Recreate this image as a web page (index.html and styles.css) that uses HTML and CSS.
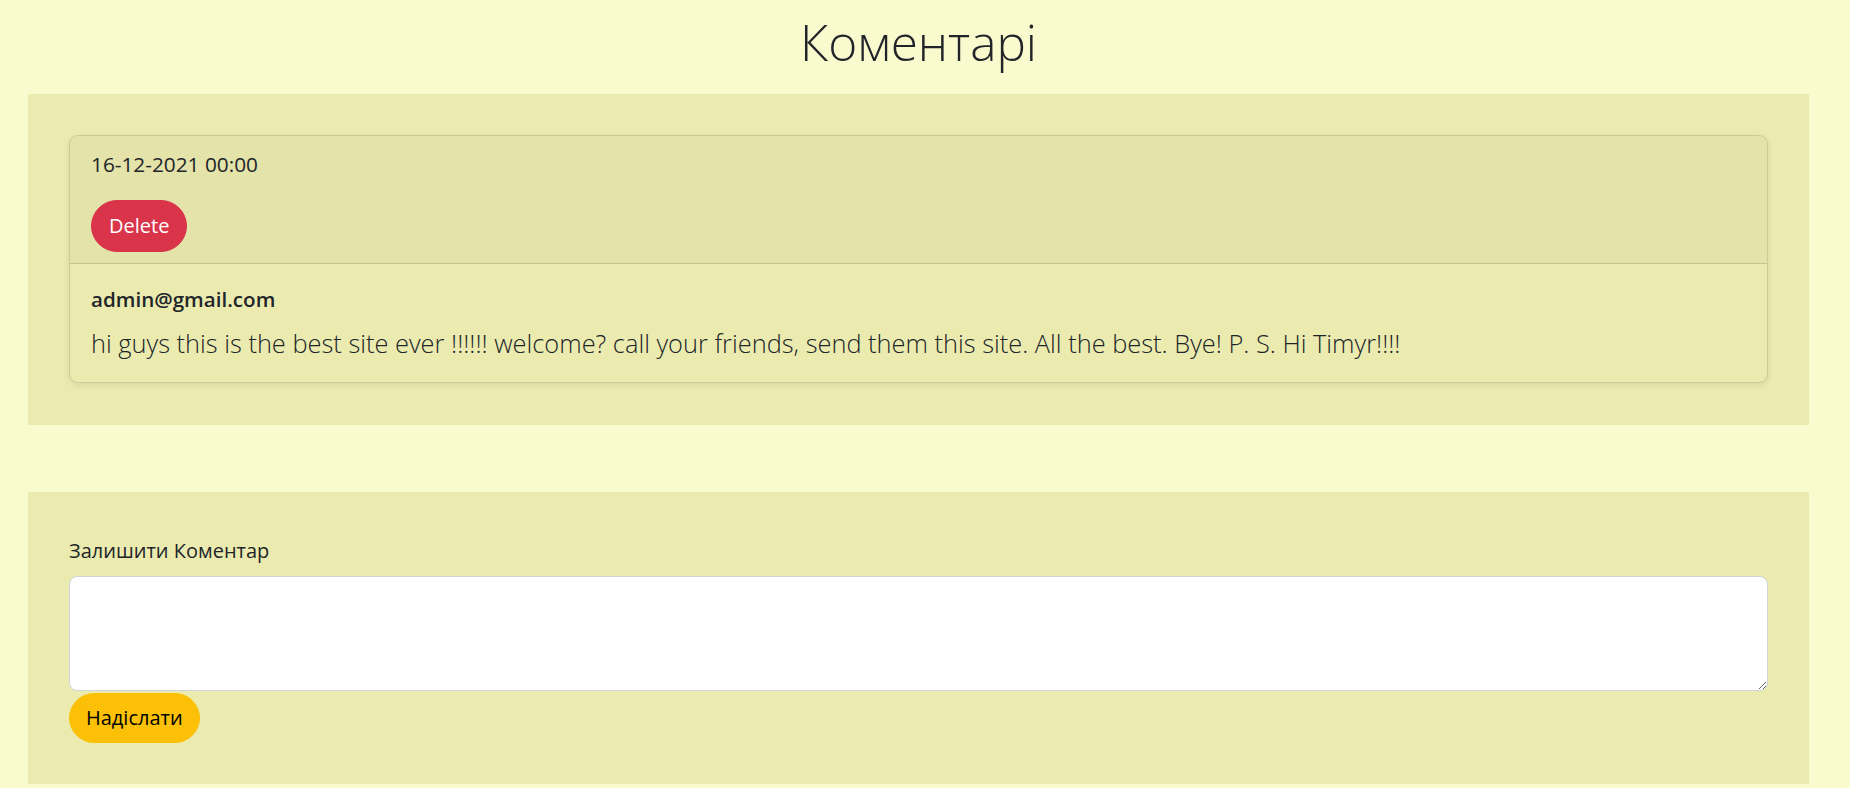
FILE: index.html
```html
<!DOCTYPE html>
<html lang="uk">
<head>
<meta charset="utf-8">
<title>Коментарі</title>
<link rel="stylesheet" href="styles.css">
</head>
<body>
<main class="page">
  <h1 class="page-title">Коментарі</h1>

  <section class="panel panel-comments">
    <article class="card">
      <header class="card-header">
        <p class="card-date">16-12-2021 00:00</p>
        <button type="button" class="btn btn-pill btn-danger">Delete</button>
      </header>
      <div class="card-body">
        <h6 class="card-author">admin@gmail.com</h6>
        <p class="card-text">hi guys this is the best site ever !!!!!! welcome? call your friends, send them this site. All the best. Bye! P. S. Hi Timyr!!!!</p>
      </div>
    </article>
  </section>

  <section class="panel panel-form">
    <form class="comment-form">
      <label class="form-label" for="comment">Залишити Коментар</label>
      <textarea id="comment" class="form-control"></textarea>
      <button type="submit" class="btn btn-pill btn-warning">Надіслати</button>
    </form>
  </section>
</main>
</body>
</html>
```
FILE: styles.css
```css
* { box-sizing: border-box; }

html, body {
  margin: 0;
  padding: 0;
}

body {
  background: #f9facd;
  color: #212529;
  font-family: "Open Sans", "Noto Sans", sans-serif;
  font-size: 20px;
  line-height: 30px;
}

.page {
  margin-left: 28px;
  width: 1781px;
}

.page-title {
  margin: 0;
  padding: 13px 0 22px;
  text-align: center;
  font-weight: 300;
  font-size: 49.5px;
  line-height: 59px;
  color: #212529;
}

.panel {
  background: #ebebb0;
  padding: 41px 41px 42px 41px;
}

.panel-form {
  margin-top: 67px;
  padding: 44px 41px 41px 41px;
}

.card {
  border: 1px solid rgba(0, 0, 0, 0.13);
  border-radius: 9px;
  box-shadow: 0 2px 6px rgba(0, 0, 0, 0.09);
  overflow: hidden;
}

.card-header {
  display: flex;
  flex-direction: column;
  align-items: flex-start;
  background: rgba(0, 0, 0, 0.03);
  border-bottom: 1px solid rgba(0, 0, 0, 0.13);
  padding: 13px 21px 11px;
}

.card-date {
  margin: 0 0 21px;
  font-size: 20.8px;
  line-height: 30px;
}

.card-body {
  padding: 23px 21px 20px;
}

.card-author {
  margin: 0 0 13px;
  font-size: 20.6px;
  font-weight: 600;
  line-height: 24px;
}

.card-text {
  margin: 0;
  font-size: 25.4px;
  font-weight: 300;
  line-height: 38px;
}

.btn {
  display: inline-block;
  font-family: inherit;
  font-size: 20px;
  line-height: 30px;
  border: 1px solid transparent;
  cursor: pointer;
}

.btn-pill {
  border-radius: 50px;
}

.btn-danger {
  background: #d9344a;
  border-color: #d9344a;
  color: #fff;
  padding: 10px 17px;
}

.btn-warning {
  background: #fcc107;
  border-color: #fcc107;
  color: #000;
  padding: 9px 16px;
}

.comment-form {
  display: flex;
  flex-direction: column;
  align-items: flex-start;
}

.form-label {
  display: block;
  margin: 0 0 10px;
  font-size: 20px;
  line-height: 30px;
}

.form-control {
  display: block;
  width: 100%;
  height: 115px;
  margin: 0 0 2px;
  padding: 8px 15px;
  background: #fff;
  border: 1px solid #ced4da;
  border-radius: 8px;
  font-family: inherit;
  font-size: 20px;
  line-height: 30px;
  color: #212529;
}
```
